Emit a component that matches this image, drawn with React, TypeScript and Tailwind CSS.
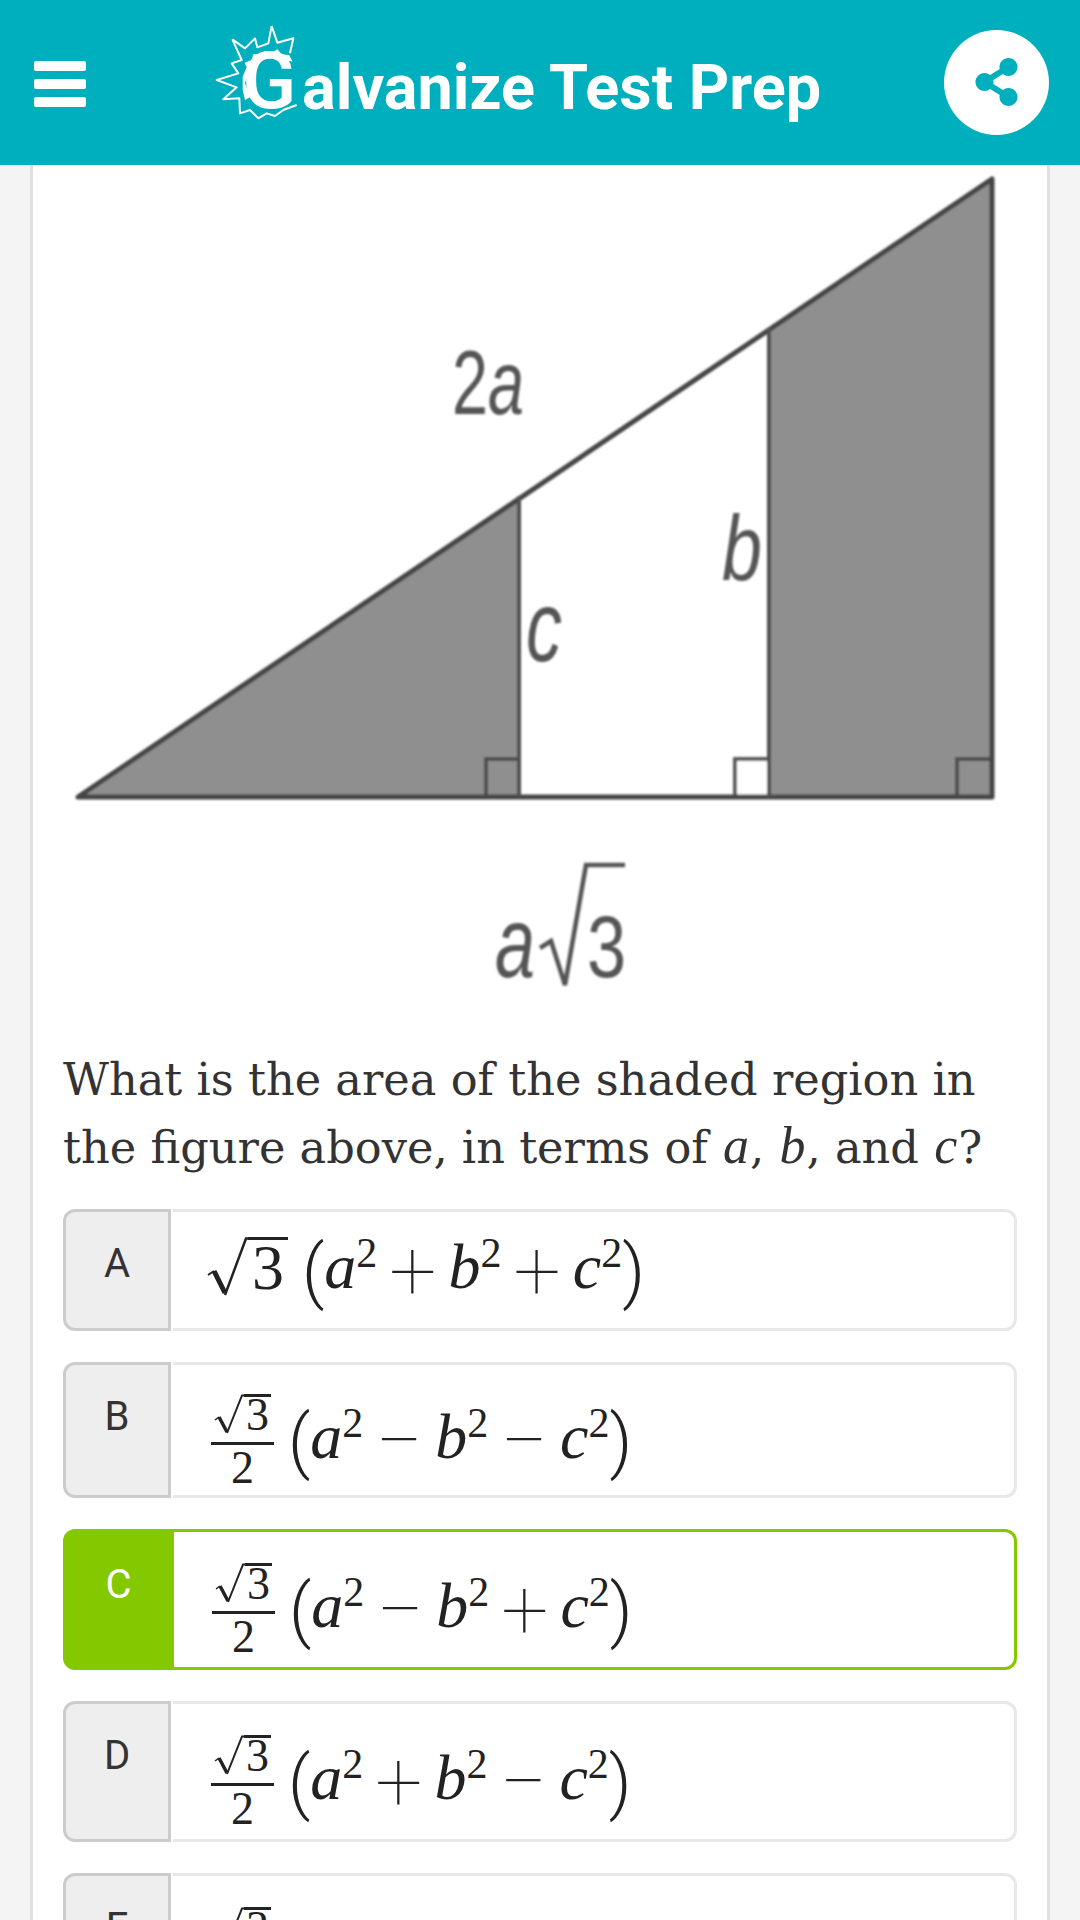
import { FaShareAlt } from "react-icons/fa";

const mathFont = { fontFamily: '"Liberation Serif", serif' };
const thinFont = { fontFamily: "Roboto, sans-serif" };

const Sup = () => <span className="text-[42px] align-[21px] leading-none not-italic">2</span>;

const Op = ({ children }: { children: string }) => (
  <span className="mx-[12px] text-[84px] font-thin not-italic align-[-12px]" style={thinFont}>
    {children}
  </span>
);

const Paren = ({ children, className = "" }: { children: string; className?: string }) => (
  <span className={`text-[70px] font-light not-italic align-[-7px] ${className}`} style={thinFont}>
    {children}
  </span>
);

// radical sign plus the overline sitting on the digit
const Sqrt = ({ small }: { small?: boolean }) =>
  small ? (
    <span className="flex items-start h-[42px]">
      <svg width="30" height="42" viewBox="0 0 30 42" className="shrink-0">
        <path d="M1 26 L5 23" stroke="#222" strokeWidth="1.5" fill="none" />
        <path d="M5 23 L13 38" stroke="#222" strokeWidth="3.5" fill="none" />
        <path d="M13 39 L28 1.5 L30 1.5" stroke="#222" strokeWidth="2" fill="none" />
      </svg>
      <span className="border-t-[3px] border-[#222] text-[46px] leading-[36px] h-[42px] px-[2px] not-italic">3</span>
    </span>
  ) : (
    <span className="inline-flex items-start h-[60px] align-[-9px]">
      <svg width="41" height="60" viewBox="0 0 41 60" className="shrink-0">
        <path d="M1 38 L7 34" stroke="#222" strokeWidth="2" fill="none" />
        <path d="M7 34 L18 56" stroke="#222" strokeWidth="5" fill="none" />
        <path d="M18 58 L39 1.5 L41 1.5" stroke="#222" strokeWidth="2.5" fill="none" />
      </svg>
      <span className="border-t-[3px] border-[#222] text-[64px] leading-[56px] h-[60px] px-[4px] not-italic">3</span>
    </span>
  );

const Frac = () => (
  <span className="inline-flex flex-col items-center w-[63px] align-[22px] mr-[14px] leading-none">
    <Sqrt small />
    <span className="w-full border-t-[3px] border-[#222] mt-[6px]" />
    <span className="text-[46px] leading-[42px] mt-[2px] not-italic">2</span>
  </span>
);

const Expr = ({ frac, op1, op2 }: { frac: boolean; op1: string; op2: string }) => (
  <div className="whitespace-nowrap text-[64px] leading-none text-[#222] italic" style={mathFont}>
    {frac ? <Frac /> : <Sqrt />}
    <Paren className={frac ? "" : "ml-[14px]"}>(</Paren>
    a
    <Sup />
    <Op>{op1}</Op>
    b
    <Sup />
    <Op>{op2}</Op>
    c
    <Sup />
    <Paren>)</Paren>
  </div>
);

const options = [
  { letter: "A", height: "h-[122px]", pad: "pl-[34px] pt-[3px]", frac: false, op1: "+", op2: "+", correct: false },
  { letter: "B", height: "h-[136px]", pad: "pl-[38px] pt-[22px]", frac: true, op1: "−", op2: "−", correct: false },
  { letter: "C", height: "h-[141px]", pad: "pl-[38px] pt-[22px]", frac: true, op1: "−", op2: "+", correct: true },
  { letter: "D", height: "h-[141px]", pad: "pl-[38px] pt-[22px]", frac: true, op1: "+", op2: "−", correct: false },
  { letter: "E", height: "h-[141px]", pad: "pl-[38px] pt-[22px]", frac: true, op1: "+", op2: "+", correct: false },
];

const Figure = () => (
  <svg width="954" height="860" viewBox="63 165 954 860" className="block mb-[22px]" fontFamily='"Liberation Sans", sans-serif'>
    <defs>
      <filter id="soft">
        <feGaussianBlur stdDeviation="0.9" />
      </filter>
    </defs>
    <g filter="url(#soft)">
      <polygon points="76,797 519,496 519,797" fill="#8f8f8f" />
      <polygon points="769,328 992,177 992,797 769,797" fill="#8f8f8f" />
      <rect x="735" y="759" width="34" height="38" fill="#fff" stroke="#5a5a5a" strokeWidth="4" />
      <rect x="486" y="759" width="33" height="38" fill="none" stroke="#505050" strokeWidth="4" />
      <rect x="957" y="759" width="35" height="38" fill="none" stroke="#505050" strokeWidth="4" />
      <path d="M78 797 L992 179 L992 797 Z" fill="none" stroke="#444" strokeWidth="5" strokeLinejoin="round" />
      <path d="M519 496 V797 M769 328 V797" fill="none" stroke="#505050" strokeWidth="4" />
      <g fill="#555">
        <text transform="translate(452 414) scale(0.72 1)" fontSize="90">
          2<tspan fontStyle="italic">a</tspan>
        </text>
        <text transform="translate(526 661) scale(0.72 1)" fontSize="100" fontStyle="italic">c</text>
        <text transform="translate(722 580) scale(0.78 1)" fontSize="92" fontStyle="italic">b</text>
        <text transform="translate(495 977) scale(0.72 1)" fontSize="100" fontStyle="italic">a</text>
        <text transform="translate(587 977) scale(0.8 1)" fontSize="88">3</text>
      </g>
      <path d="M540 948 L551 941 L565 985 L586 865 H625" fill="none" stroke="#555" strokeWidth="4.5" />
    </g>
  </svg>
);

const App = () => {
  return (
    <div className="h-[1920px] overflow-hidden bg-[#f4f4f4]">
      <header className="h-[165px] bg-[#00afbd] flex items-center text-white pl-[34px] pr-[31px]">
        <div className="w-[52px] flex flex-col gap-[8px] shrink-0 mt-[2px]">
          <div className="h-[10px] bg-white rounded-[2px]" />
          <div className="h-[10px] bg-white rounded-[2px]" />
          <div className="h-[10px] bg-white rounded-[2px]" />
        </div>
        <div className="flex items-center ml-[114px] flex-1">
          <svg width="120" height="120" viewBox="0 0 360 360" className="shrink-0 -mt-[25px]">
            <path
              d="M215 48 L232 98 L280 85 L270 130 M97 88 L135 115 L165 85 L172 112 L205 100 L215 48 M97 88 L125 150 L95 160 L115 190 L50 210 L110 232 L70 268 L118 265 L120 310 L150 300 L175 325 L200 310 L225 318 L250 300 L290 285"
              fill="none"
              stroke="#fff"
              strokeWidth="6"
              strokeLinejoin="round"
            />
            <path
              d="M128 200 L140 172 L134 158 L155 150 L160 132 L180 134 L195 122 L215 128 L232 118 L245 132 L268 136 L278 155 L250 148 L190 135 L150 165 L135 220 L150 262 L135 270 L128 240 Z"
              fill="#fff"
            />
            <text x="126" y="294" fontSize="240" fontWeight="500" fill="#fff" fontFamily="Roboto, sans-serif">G</text>
          </svg>
          <span className="-ml-[18px] mt-[10px] text-[63px] font-bold leading-none whitespace-nowrap" style={{ fontFamily: "Roboto, sans-serif" }}>
            alvanize Test Prep
          </span>
        </div>
        <div className="w-[105px] h-[105px] rounded-full bg-white flex items-center justify-center shrink-0 -mt-[1px]">
          <FaShareAlt className="w-[43px] h-[48px] text-[#00afbd]" />
        </div>
      </header>
      <main className="px-[30px]">
        <div className="bg-white border-x-[3px] border-[#e0e0e0] px-[30px]">
          <Figure />
          <p className="text-[44.7px] leading-[66px] text-[#333] mb-[28px] whitespace-nowrap" style={{ fontFamily: '"DejaVu Serif", serif' }}>
            What is the area of the shaded region in
            <br />
            the figure above, in terms of{" "}
            <i className="text-[52px] mx-[1px]" style={mathFont}>a</i>,{" "}
            <i className="text-[52px] mx-[1px]" style={mathFont}>b</i>, and{" "}
            <i className="text-[52px] mx-[1px]" style={mathFont}>c</i>?
          </p>
          <div className="flex flex-col gap-[31px]">
            {options.map((o) => (
              <div key={o.letter} className={`flex ${o.height}`}>
                <div
                  className={`text-center text-[40px] leading-[60px] rounded-l-[12px] ${
                    o.correct
                      ? "w-[111px] bg-[#84c800] text-white pt-[26px]"
                      : "w-[108px] bg-[#eeeeee] text-[#333] border-[3px] border-[#cccccc] pt-[22px]"
                  }`}
                  style={{ fontFamily: "Roboto, sans-serif" }}
                >
                  {o.letter}
                </div>
                <div
                  className={`flex-1 flex items-center border-[3px] border-l-0 rounded-r-[12px] ${o.pad} ${
                    o.correct ? "border-[#84c800]" : "border-[#e8e8e8] ml-[2px]"
                  }`}
                >
                  <Expr frac={o.frac} op1={o.op1} op2={o.op2} />
                </div>
              </div>
            ))}
          </div>
        </div>
      </main>
    </div>
  );
};

export default App;
